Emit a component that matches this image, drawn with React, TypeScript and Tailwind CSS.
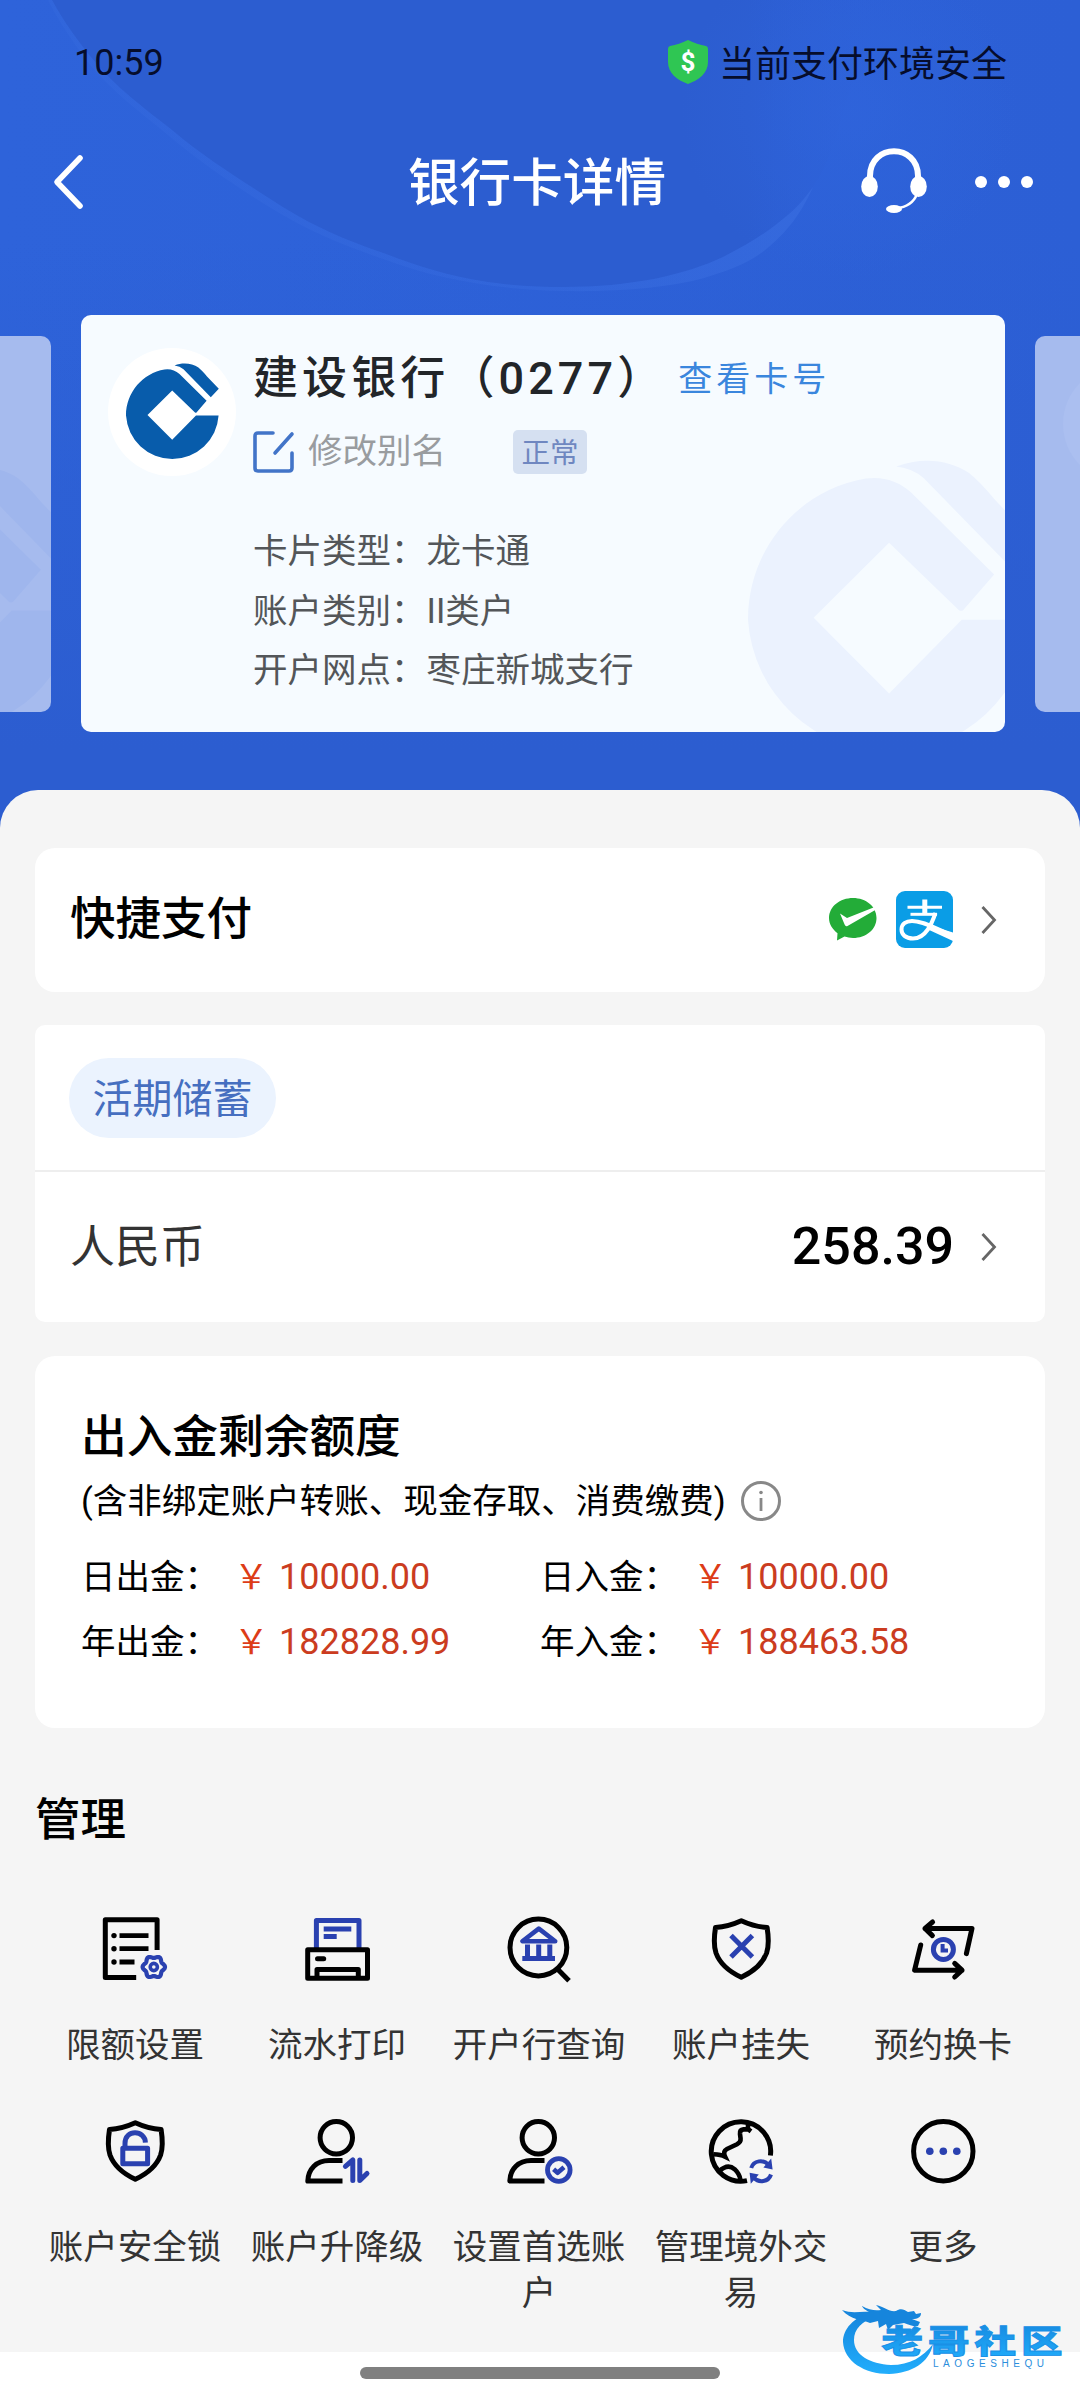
import type { ReactNode } from 'react'

const INK = '#000000'
const BLUE = '#2a41b0'

const SHIELD =
  'M36.3 8.7C28 12.5 18 15 10.5 15.5C9 25 9 35 11 41C15 52 25 60 36.3 65.3C47.6 60 57.6 52 61.6 41C63.6 35 63.6 25 62.1 15.5C54.6 15 44.6 12.5 36.3 8.7Z'

// Six-lobed outline of the small settings gear
const gearPath =
  Array.from({ length: 72 }, (_, i) => {
    const a = (i * Math.PI) / 36
    const r = 10.1 + 1.1 * Math.cos(6 * a)
    return `${i ? 'L' : 'M'}${(54.8 + r * Math.cos(a)).toFixed(2)} ${(55 + r * Math.sin(a)).toFixed(2)}`
  }).join('') + 'Z'

function Icon({ children }: { children: ReactNode }) {
  return (
    <svg width="72" height="72" viewBox="0 0 72 72" fill="none" stroke={INK} strokeWidth="5" aria-hidden>
      {children}
    </svg>
  )
}

function Person({ children }: { children: ReactNode }) {
  return (
    <Icon>
      <circle cx="35.3" cy="23.7" r="16.2" />
      <path d="M41.5 46.4H28C15.5 46.4 7.2 55 6.8 67H41.5" strokeLinejoin="round" />
      {children}
    </Icon>
  )
}

const actions: { label: string; icon: ReactNode }[] = [
  {
    label: '限额设置',
    icon: (
      <Icon>
        <path d="M58.1 38V7.8H6.3V65.6H37.2" strokeLinejoin="round" />
        <path d="M20.5 23.6H49.5M20.5 36.7H49.5M20.5 50H35.5" strokeWidth="4.8" />
        <g fill={INK} stroke="none">
          <circle cx="15" cy="23.6" r="2.7" />
          <circle cx="15" cy="36.7" r="2.7" />
          <circle cx="15" cy="50" r="2.7" />
        </g>
        <g stroke={BLUE}>
          <path d={gearPath} strokeWidth="4.2" strokeLinejoin="round" />
          <circle cx="54.8" cy="55" r="3.6" strokeWidth="3.6" />
        </g>
      </Icon>
    ),
  },
  {
    label: '流水打印',
    icon: (
      <Icon>
        <g stroke={BLUE}>
          <path d="M15.4 36V8.6H58V36" strokeLinejoin="round" />
          <path d="M22.7 17H50.3M22.7 24.4H35.7" />
        </g>
        <rect x="6.7" y="37.7" width="59.8" height="28.6" strokeLinejoin="round" />
        <path d="M16 66V57.6H57.3V66" strokeLinejoin="round" />
        <path d="M16.5 46.7H22.7" strokeLinecap="round" />
      </Icon>
    ),
  },
  {
    label: '开户行查询',
    icon: (
      <Icon>
        <circle cx="35.4" cy="35.5" r="28.4" />
        <path d="M53.5 56L66 68.8" />
        <g stroke={BLUE}>
          <path d="M35.8 16.6L19.4 29.2H52.2Z" strokeWidth="4.6" strokeLinejoin="round" />
          <path d="M24.5 32.5V45M35.7 32.5V45M46.8 32.5V45" />
          <path d="M19.3 46.6H52" />
        </g>
      </Icon>
    ),
  },
  {
    label: '账户挂失',
    icon: (
      <Icon>
        <path d={SHIELD} strokeLinejoin="round" />
        <path d="M26 23.6L47.4 45M47.4 23.6L26 45" stroke={BLUE} />
      </Icon>
    ),
  },
  {
    label: '预约换卡',
    icon: (
      <Icon>
        <g strokeLinecap="round" strokeLinejoin="round">
          <path d="M18 16.4H65L59.4 41.6M25.6 10L18 16.4L25.4 23.6" />
          <path d="M13.7 33L7.6 58.2H55M47.7 51.4L55 58.2L47.7 65" />
        </g>
        <circle cx="36.4" cy="37.4" r="10" stroke={BLUE} />
        <path d="M35.6 32V38.6H41" stroke={BLUE} strokeWidth="4" />
      </Icon>
    ),
  },
  {
    label: '账户安全锁',
    icon: (
      <Icon>
        <path d={SHIELD} strokeLinejoin="round" />
        <g stroke={BLUE}>
          <rect x="23.8" y="34.3" width="24.8" height="15.4" strokeLinejoin="round" />
          <path d="M26 34V29.5C26 14.5 46.2 16 46.4 28.6" />
        </g>
      </Icon>
    ),
  },
  {
    label: '账户升降级',
    icon: (
      <Person>
        <path
          d="M44.4 52.4L51.8 46V66.6M58.8 46V66.6L66 59.4"
          stroke={BLUE}
          strokeLinecap="round"
          strokeLinejoin="round"
        />
      </Person>
    ),
  },
  {
    label: '设置首选账户',
    icon: (
      <Person>
        <circle cx="55.8" cy="56" r="11.3" stroke={BLUE} strokeWidth="4.8" />
        <path d="M50.6 55.2L54.6 58.8L61 53.2" stroke={BLUE} strokeWidth="4.6" strokeLinejoin="round" />
      </Person>
    ),
  },
  {
    label: '管理境外交易',
    icon: (
      <Icon>
        <path d="M65.4 41.5A29.7 29.7 0 1 0 42 66.6" />
        <path
          d="M43 9V15.2L46 17.4M44 15.4H38.5Q34.6 15.8 35 20L35.6 24.6Q36 28 32 30.2L22 35Q17.5 37.4 20 42.6Q16 40.5 8.5 40.2"
          strokeWidth="4.6"
        />
        <path d="M14 57.5C20 51.8 25.4 51.6 29.6 55.2C33.6 59 35 62 35.4 66" strokeWidth="4.6" />
        <g stroke={BLUE} strokeWidth="4">
          <path d="M46.2 54C48.5 46.4 58.5 45 63.6 51" />
          <path d="M66 60.5C63.5 68 54 69.4 48.6 63.6" />
        </g>
        <path d="M66.2 44.4L67.6 55.4L58.4 53.6ZM45.8 69.8L44.6 58.8L53.8 60.6Z" fill={BLUE} stroke="none" />
      </Icon>
    ),
  },
  {
    label: '更多',
    icon: (
      <Icon>
        <circle cx="36.3" cy="37.3" r="29.7" />
        <g fill={BLUE} stroke="none">
          <circle cx="22.8" cy="37.3" r="3.8" />
          <circle cx="36.3" cy="37.3" r="3.8" />
          <circle cx="49.8" cy="37.3" r="3.8" />
        </g>
      </Icon>
    ),
  },
]

const limits = [
  { label: '日出金：', value: '10000.00' },
  { label: '日入金：', value: '10000.00' },
  { label: '年出金：', value: '182828.99' },
  { label: '年入金：', value: '188463.58' },
]

const details = [
  ['卡片类型：', '龙卡通'],
  ['账户类别：', 'II类户'],
  ['开户网点：', '枣庄新城支行'],
]

function BankMark({ className }: { className: string }) {
  return (
    <svg viewBox="0 0 93 100" className={className} fill="currentColor" aria-hidden>
      <path d="M92.6 53.6A46.4 46.4 0 0 1 0 53.6C0 30 17 11 38.5 7.4Q47 6.2 53.5 12L80.6 38.8L70.5 50.4Q69.8 51 69 50.4L46.2 28.4L21.5 53L46.2 77.8L70 53.6Z" />
      <path d="M48.6 3.4C57 .2 66 1.2 72.4 5.6Q76 8.5 81 14.5L92.8 26.8L84.8 35.2L57.5 7.2Q54 4 48.6 3.4Z" />
    </svg>
  )
}

function Chevron() {
  return (
    <svg width="16" height="30" viewBox="0 0 16 30" fill="none" stroke="#666" strokeWidth="2.8" aria-hidden>
      <path d="M1.5 2L13.5 15L1.5 28" />
    </svg>
  )
}

function SideCard() {
  return (
    <div className="relative h-[376px] w-[832px] shrink-0 overflow-hidden rounded-[10px] bg-[#a6bbee]">
      <div className="absolute left-[28px] top-[30px] h-[116px] w-[116px] rounded-full bg-[#abbff0]" />
      <BankMark className="absolute left-[600px] top-[127px] w-[256px] text-[#9fb6ed]" />
    </div>
  )
}

function HeroBackdrop() {
  return (
    <svg className="absolute left-0 top-0" width="1080" height="840" viewBox="0 0 1080 840" aria-hidden>
      <defs>
        <linearGradient id="hero" x1="0" y1="0" x2="1" y2="0">
          <stop offset="0" stopColor="#2e63da" />
          <stop offset=".5" stopColor="#2d61d8" />
          <stop offset="1" stopColor="#2c5fd5" />
        </linearGradient>
        <linearGradient id="fade" x1="0" y1="0" x2="0" y2="1">
          <stop offset="0" stopColor="#2c5dd0" stopOpacity="0" />
          <stop offset=".85" stopColor="#2c5dd0" />
        </linearGradient>
        <linearGradient id="inner" x1="0" y1="0" x2="1" y2="0">
          <stop offset="0" stopColor="#2c5dd0" />
          <stop offset=".84" stopColor="#2c5dd0" />
          <stop offset="1" stopColor="#2c5fd5" stopOpacity="0" />
        </linearGradient>
        <radialGradient id="glow" cx="850" cy="110" r="170" gradientUnits="userSpaceOnUse">
          <stop offset="0" stopColor="#3066de" stopOpacity=".55" />
          <stop offset="1" stopColor="#3066de" stopOpacity="0" />
        </radialGradient>
        <linearGradient id="rim" x1="0" y1="0" x2="1" y2="0">
          <stop offset="0" stopColor="#3a6ee0" stopOpacity=".25" />
          <stop offset=".6" stopColor="#3a6ee0" stopOpacity=".35" />
          <stop offset="1" stopColor="#3a6ee0" stopOpacity=".6" />
        </linearGradient>
      </defs>
      <rect width="1080" height="840" fill="url(#hero)" />
      <rect y="240" width="1080" height="600" fill="url(#fade)" />
      <path
        d="M52 0C64 22 76 38 90 56C116 88 144 108 172 130C205 158 238 178 275 202C312 226 345 240 386 254C420 267 450 276 482 281C512 286 538 287 565 287C598 287 626 284 654 279C682 273 704 266 723 257C745 246 763 235 778 223C793 212 804 200 813 187C836 156 846 90 880 0Z"
        fill="url(#inner)"
      />
      <circle cx="850" cy="110" r="170" fill="url(#glow)" />
      <path
        d="M52 0C64 22 76 38 90 56C116 88 144 108 172 130C205 158 238 178 275 202C312 226 345 240 386 254C420 267 450 276 482 281C512 286 538 287 565 287C598 287 626 284 654 279C682 273 704 266 723 257C745 246 763 235 778 223C793 212 804 200 813 187C800 216 786 232 770 246C752 262 730 270 704 278C672 287 620 292 565 291C500 290 440 280 386 260C345 246 308 231 271 208C232 184 200 162 168 135C140 112 112 92 86 60C72 40 60 24 48 0Z"
        fill="url(#rim)"
      />
    </svg>
  )
}

function StatusBar() {
  return (
    <div className="relative flex h-[126px] items-center justify-between pl-[74px] pr-[73px] text-[36px] leading-[44px] text-[#060d2c]">
      <span>10:59</span>
      <div className="flex items-center gap-[10px]">
        <svg width="42" height="46" viewBox="0 0 42 46" className="mb-[2px]" aria-hidden>
          <path
            d="M21 1C27 4 33 6 39 7Q41 7.5 41 10V23C41 34 32 41 21 45C10 41 1 34 1 23V10Q1 7.500 3 7C9 6 15 4 21 1Z"
            fill="#2fc653"
          />
          <text x="21" y="32" textAnchor="middle" fontFamily="Roboto" fontWeight="700" fontSize="26" fill="#fff">
            $
          </text>
        </svg>
        <span className="pt-[3px]">当前支付环境安全</span>
      </div>
    </div>
  )
}

function NavBar() {
  return (
    <div className="relative grid h-[112px] grid-cols-[1fr_auto_1fr] items-center pl-[51px] pr-[45px] text-white">
      <svg width="34" height="56" viewBox="0 0 34 56" fill="none" stroke="#fff" strokeWidth="5.6" aria-hidden>
        <path d="M29 4L6 28L29 52" strokeLinecap="round" strokeLinejoin="round" />
      </svg>
      <h1 className="-ml-[6px] mr-[6px] pt-[3px] text-[51.600px] font-medium leading-[64px]">银行卡详情</h1>
      <div className="flex items-center justify-end gap-[45px]">
        <svg width="68" height="66" viewBox="0 0 68 66" fill="none" stroke="#fff" className="mb-[3px]" aria-hidden>
          <path d="M10 32V28C10 -5 58 -5 58 28V32" strokeWidth="6" />
          <path d="M57 46C54 54 48 59 36 60.500" strokeWidth="2.400" />
          <g fill="#fff" stroke="none">
            <ellipse cx="9.500" cy="38.500" rx="8.300" ry="10.500" />
            <ellipse cx="58.500" cy="38.500" rx="8.300" ry="10.500" />
            <ellipse cx="34" cy="61" rx="8" ry="4" />
          </g>
        </svg>
        <svg width="62" height="14" viewBox="0 0 62 14" fill="#fff" aria-hidden>
          <circle cx="8" cy="7" r="6" />
          <circle cx="31" cy="7" r="6" />
          <circle cx="54" cy="7" r="6" />
        </svg>
      </div>
    </div>
  )
}

function BankCard() {
  return (
    <div className="relative flex h-[417px] w-[924px] shrink-0 overflow-hidden rounded-[10px] bg-[#f6fbff]">
      <BankMark className="absolute left-[667px] top-[141px] w-[284px] text-[#ebf2fe]" />
      <div className="relative ml-[27px] mt-[33px] flex h-[128px] w-[128px] shrink-0 items-center justify-center rounded-full bg-white">
        <BankMark className="w-[93px] text-[#085cab]" />
      </div>
      <div className="relative ml-[17px] pt-[35px]">
        <div className="flex h-[58px] items-center">
          <span className="text-[45px] font-medium tracking-[4.100px] text-[#222529]">建设银行（0277）</span>
          <span className="ml-[12px] text-[34px] tracking-[4px] text-[#3a86dd]">查看卡号</span>
        </div>
        <div className="mt-[19px] flex h-[50px] items-center">
          <svg width="42" height="42" viewBox="0 0 42 42" fill="none" stroke="#4274c8" strokeWidth="3.600" aria-hidden>
            <path d="M20 2H5Q2 2 2 5V37Q2 40 5 40H36Q39 40 39 37V22" strokeLinecap="round" />
            <path d="M22 22L39 3" strokeLinecap="round" />
          </svg>
          <span className="ml-[13px] text-[34.500px] text-[#999c9f]">修改别名</span>
          <span className="ml-[67px] flex h-[44px] w-[74px] items-center justify-center rounded-[5px] bg-[#d5e0f1] pt-[4px] text-[28.500px] text-[#6f87c0]">
            正常
          </span>
        </div>
        <dl className="mt-[45px] text-[34.500px] leading-[59.500px] text-[#535659]">
          {details.map(([term, value]) => (
            <div key={term} className="flex">
              <dt>{term}</dt>
              <dd className="ml-px">{value}</dd>
            </div>
          ))}
        </dl>
      </div>
    </div>
  )
}

function WechatPay() {
  return (
    <svg width="50" height="45" viewBox="0 0 50 45" aria-hidden>
      <path
        d="M25 1C38 1 48.500 9.500 48.500 21S38 41 25 41Q20.500 41 16.500 39.600L9 43.500L9.500 36.200C4.500 32.500 1 27 1 21C1 9.500 12 1 25 1Z"
        fill="#23ac38"
      />
      <path d="M12 16.500L19 21L48 9.500L49 12L19.500 29Q17.500 30 16.600 27.500Z" fill="#fff" />
    </svg>
  )
}

function Alipay() {
  return (
    <svg width="57" height="57" viewBox="0 0 57 57" aria-hidden>
      <rect width="57" height="57" rx="9" fill="#0a9de6" />
      <g fill="none" stroke="#fff">
        <path d="M11.500 16.300H46" strokeWidth="3" />
        <path d="M14.500 23.300H41" strokeWidth="3" />
        <path d="M28.800 8.500V23" strokeWidth="5" />
        <path
          d="M39.500 22C36 32 30 47.500 17 47.500C9.500 47.500 5.500 43.500 5.500 38.600C5.500 33 10 30 16 30C28 30 40 38 58 45"
          strokeWidth="4"
        />
      </g>
      <path d="M31 33.500L57 41.500V50L31 38Z" fill="#fff" />
    </svg>
  )
}

function CommunityMark() {
  return (
    <svg
      className="absolute left-[838px] top-[2298px]"
      width="232"
      height="82"
      viewBox="0 0 232 82"
      aria-label="老哥社区"
    >
      <defs>
        <linearGradient id="wave" x1="0" y1="0" x2="0" y2="1">
          <stop offset="0" stopColor="#1484dc" />
          <stop offset="1" stopColor="#22aefc" />
        </linearGradient>
      </defs>
      <path
        d="M33 14C15 20 5 31 5 44C6 63 26 76 51 76C74 75 91 65 95 46C85 59 72 67 53 67C32 66 16 57 16 42C16 31 24 23 37 19Z"
        fill="url(#wave)"
      />
      <path
        d="M4 12C14 16 23 13 31 14C27 12 24 9 24 8C31 12 37 13 43 12L38 7C47 9 51 14 58 13C62 10 66 11 70 14L76 13L78 16L83 15C83 19 80 21 74 21L82 24L80 28C76 29 72 27 66 25L55 27L50 32L48 26L41 30L40 23L32 25C26 22 12 22 4 12Z"
        fill="#1685dc"
      />
      <text
        transform="translate(43.500 54.500) scale(1 .76)"
        fontFamily='"Noto Sans CJK SC", sans-serif'
        fontWeight="900"
        fontSize="41.500"
        letterSpacing="5"
        fill="url(#wave)"
        stroke="#1a90e6"
        strokeWidth="1.200"
      >
        老哥社区
      </text>
      <text
        x="95"
        y="69"
        fontFamily='"Liberation Sans", sans-serif'
        fontSize="10"
        textLength="111"
        fill="#2b8edc"
      >
        LAOGESHEQU
      </text>
    </svg>
  )
}

export default function App() {
  return (
    <div className="relative flex h-[2400px] w-[1080px] flex-col overflow-hidden bg-[#2c5dd0] font-['Roboto','Noto_Sans_CJK_SC',sans-serif]">
      <HeroBackdrop />
      <StatusBar />
      <NavBar />

      <div className="relative mt-[77px] flex h-[417px] items-center justify-center gap-[30px] pl-[6px]">
        <SideCard />
        <BankCard />
        <SideCard />
      </div>

      <main className="relative mt-[58px] h-[1562px] rounded-t-[38px] bg-[#f5f5f5] px-[35px] pt-[58px]">
        <section className="flex h-[144px] items-center rounded-[20px] bg-white pl-[35px] pr-[48px]">
          <h2 className="flex-1 text-[45.500px] font-medium text-black">快捷支付</h2>
          <div className="mb-[2px] mr-[28px] flex items-center gap-[18px]">
            <WechatPay />
            <Alipay />
          </div>
          <Chevron />
        </section>

        <section className="mt-[33px] h-[297px] rounded-[10px] bg-white">
          <div className="flex h-[147px] items-center border-b-2 border-[#eeeeee] pl-[34px]">
            <span className="flex h-[80px] w-[207px] items-center justify-center rounded-full bg-[#ebf3fe] pt-[5px] text-[40px] text-[#466fc0]">
              活期储蓄
            </span>
          </div>
          <div className="flex h-[150px] items-center pl-[35px] pr-[48px]">
            <span className="flex-1 pt-[2px] text-[45px] text-[#333333]">人民币</span>
            <span className="mr-[27px] text-[52px] font-medium text-black">258.39</span>
            <Chevron />
          </div>
        </section>

        <section className="mt-[34px] h-[372px] rounded-[20px] bg-white pl-[46px] pt-[55px] text-black">
          <h2 className="text-[45.700px] font-medium leading-[54px]">出入金剩余额度</h2>
          <div className="mt-[15px] flex h-[44px] items-center text-[34.500px]">
            <span>(含非绑定账户转账、现金存取、消费缴费)</span>
            <svg
              className="mb-[3px] ml-[14px]"
              width="42"
              height="42"
              viewBox="0 0 42 42"
              fill="none"
              stroke="#888"
              aria-hidden
            >
              <circle cx="21" cy="21" r="18.500" strokeWidth="3" />
              <path d="M21 18V31" strokeWidth="2.800" />
              <circle cx="21" cy="12.500" r="1.800" fill="#888" stroke="none" />
            </svg>
          </div>
          <div className="mt-[21px] grid grid-cols-[459px_1fr] text-[34.500px] leading-[64.500px]">
            {limits.map((limit) => (
              <div key={limit.label} className="flex">
                <span className="w-[153px]">{limit.label}</span>
                <span className="w-[45px] text-[#dd3c17]">￥</span>
                <span className="text-[36px] text-[#cb3c20]">{limit.value}</span>
              </div>
            ))}
          </div>
        </section>

        <h2 className="mt-[66px] text-[45.500px] font-medium leading-[54px] text-black">管理</h2>
        <div className="-ml-px mr-px mt-[64px] grid grid-cols-5">
          {actions.map((action) => (
            <div key={action.label} className="flex h-[202px] flex-col items-center">
              {action.icon}
              <span className="mt-[38px] text-center text-[34.500px] leading-[46px] text-[#333333]">{action.label}</span>
            </div>
          ))}
        </div>
      </main>

      <div className="relative flex h-[48px] justify-center bg-white pt-[15px]">
        <div className="h-[12px] w-[360px] rounded-full bg-[#808080]" />
      </div>
      <CommunityMark />
    </div>
  )
}
